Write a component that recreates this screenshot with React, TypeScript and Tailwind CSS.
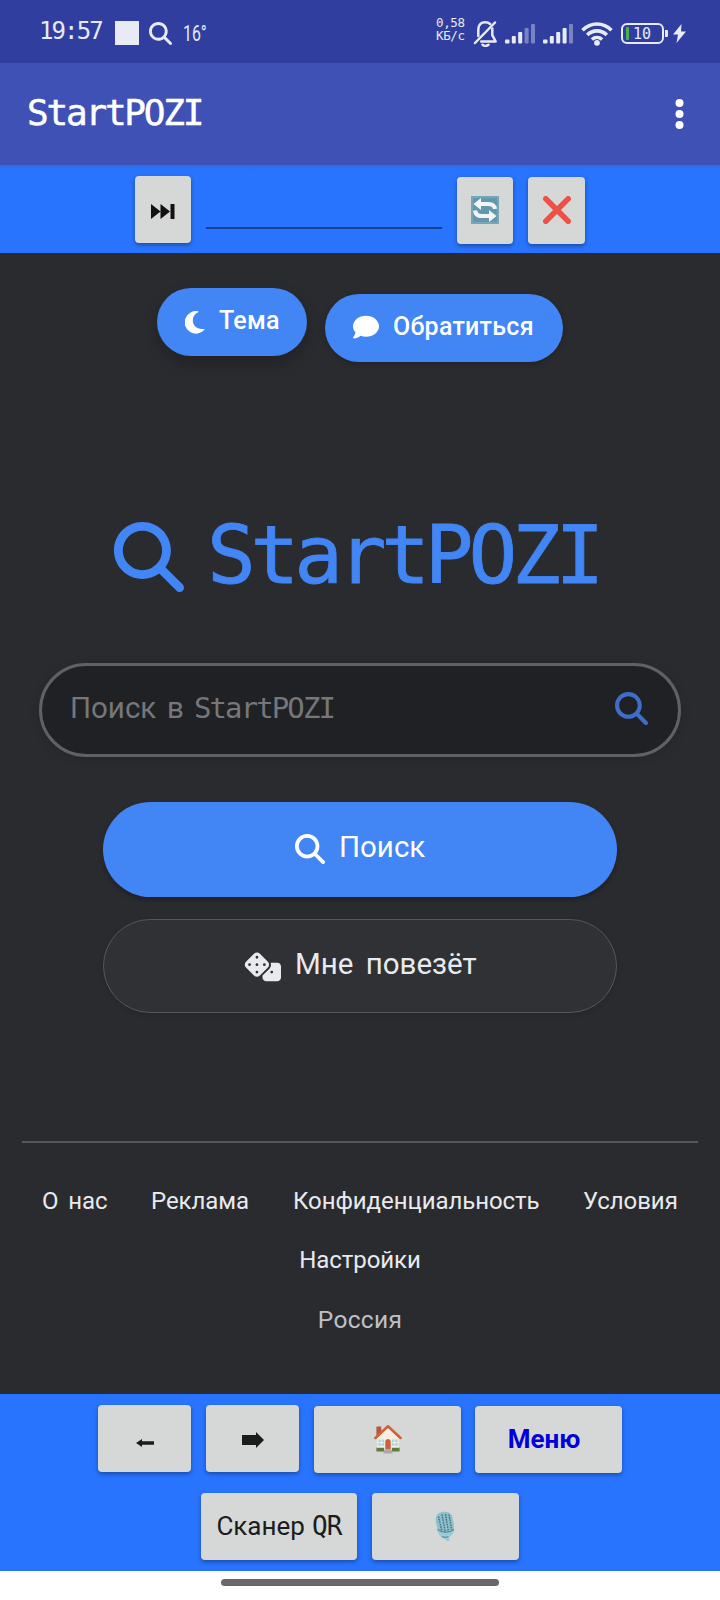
import type { ReactNode } from "react";
import { FaComment, FaDice, FaMagnifyingGlass } from "react-icons/fa6";

const mono = "font-['DejaVu_Sans_Mono',monospace]";

function Signal({ x, bars }: { x: string; bars: number }) {
  return (
    <svg className={`h-[20px] w-[31px] shrink-0 ${x}`} viewBox="0 0 31 20" fill="#e8eaf6">
      <rect x="0" y="15.5" width="4.5" height="4" rx="1" />
      <rect x="6.8" y="12" width="4" height="7.5" rx="1" />
      <rect x="13.2" y="8" width="4" height="11.5" rx="1" />
      <rect x="19.6" y="4" width="4" height="15.5" rx="1" opacity={bars > 3 ? 1 : 0.4} />
      <rect x="26" y="0" width="4" height="19.5" rx="1" opacity="0.4" />
    </svg>
  );
}

function StatusBar() {
  return (
    <header className="flex h-[63px] items-start bg-[#303f9f] text-[#e8eaf6]">
      <span className={`mt-[15px] ml-[39px] w-[76px] text-[24px] leading-[32px] tracking-[-1.9px] ${mono}`}>19:57</span>
      <span className="mt-[21px] h-[24px] w-[24px] bg-[#e8eaf6]" />
      <FaMagnifyingGlass className="mt-[22px] ml-[10px] size-[23px]" />
      <span className="mt-[21px] ml-[11px] flex w-[24px] font-['Roboto',sans-serif] text-[22px] leading-[26px]">
        <span className="origin-left scale-x-[0.72]">16°</span>
      </span>
      <div className={`mt-[16px] ml-[229px] flex w-[36px] flex-col text-[12.5px] leading-[13px] tracking-[-0.4px] whitespace-nowrap ${mono}`}>
        <span>0,58</span>
        <span>КБ/с</span>
      </div>
      <svg className="mt-[20px] ml-[1px] h-[27px] w-[25px] shrink-0" viewBox="0 0 25 27" fill="none" stroke="#e8eaf6" strokeWidth="2.5" strokeLinecap="round" strokeLinejoin="round">
        <path d="M5.3 16V9.8C5.3 4.6 8 2.3 12.2 2.3c2 0 3.6.5 4.9 1.7M19.3 8.5v6.7l3.4 6.3H8.2" />
        <path d="M2 23 22 2.5" />
        <path d="M9.5 24.8c1.8 1.3 4.3 1.3 6 0" />
      </svg>
      <Signal x="mt-[24px] ml-[7px]" bars={3} />
      <Signal x="mt-[24px] ml-[7px]" bars={4} />
      <svg className="mt-[22px] ml-[7px] h-[24px] w-[32px] shrink-0" viewBox="0 0 32 24" fill="none" stroke="#e8eaf6" strokeWidth="3.6">
        <path d="M1.5 8.2c8.300-8.200 20.700-8.200 29 0" />
        <path d="M6.2 13c5.600-5.500 14-5.500 19.600 0" />
        <path d="M10.900 17.500c3-2.700 7.200-2.700 10.200 0" />
        <circle cx="16" cy="20.800" r="2.900" fill="#e8eaf6" stroke="none" />
      </svg>
      <span className={`mt-[23px] ml-[8px] flex h-[21px] w-[43px] shrink-0 items-center rounded-[6px] border-2 border-[#e8eaf6] text-[15px] ${mono}`}>
        <span className="ml-[3px] h-[13px] w-[3px] shrink-0 rounded-[1px] bg-[#4caf50]" />
        <span className="ml-[4px] leading-[16px]">10</span>
      </span>
      <span className="mt-[30px] ml-[1px] h-[7px] w-[3px] shrink-0 rounded-r-[1px] bg-[#e8eaf6]" />
      <svg className="mt-[24px] ml-[5px] h-[19px] w-[13px] shrink-0" viewBox="0 0 13 19" fill="#e8eaf6">
        <path d="M8.500 0 0 10.500h5L3.500 19 13 7.500H8z" />
      </svg>
    </header>
  );
}

function Key({ size, children }: { size: string; children: ReactNode }) {
  return (
    <button className={`flex h-[67px] shrink-0 items-center justify-center rounded-[4px] bg-[#d6d8d7] text-[#1b1c1c] shadow-[0_2px_4px_rgba(0,0,0,0.35)] ${size}`}>
      {children}
    </button>
  );
}

function Toolbar() {
  return (
    <div className="flex h-[88px] bg-[#2874ff] bg-linear-to-b from-[#2e6ae8] to-[#2874ff] to-[5px] pt-[11px] pl-[135px]">
      <Key size="w-[56px]">
        <svg className="mt-[3px] h-[15px] w-[24px]" viewBox="0 0 24 15" fill="#111">
          <path d="M0 0 9.500 7.500 0 15zM9.500 0 19 7.500 9.500 15zM19.500 0H23.500V15H19.500z" />
        </svg>
      </Key>
      <input aria-label="URL" className="mt-[7px] ml-[15px] h-[46px] w-[236px] border-b-2 border-[#173f91] bg-transparent outline-none" />
      <div className="ml-[15px] flex gap-[15px] pt-px">
        <Key size="w-[56px]">
          <svg className="mt-[-1px] size-[28px]" viewBox="0 0 28 28">
            <rect width="28" height="28" rx="1" fill="#6497ad" />
            <path d="M1 1h26v26H1z" fill="none" stroke="#88b5c8" strokeWidth="1" />
            <path d="M9 8h8.500c4 0 6 1.500 6.500 5M19 20h-8.500c-4 0-6-1.500-6.500-5.500" fill="none" stroke="#f1f5f6" strokeWidth="4.200" />
            <path d="M2.500 8 10 2v12zM25.500 20 18 14v12z" fill="#f1f5f6" />
          </svg>
        </Key>
        <Key size="w-[57px]">
          <svg className="mt-[-1px] size-[28px]" viewBox="0 0 28 28" stroke="#ec5148" strokeWidth="5.500" strokeLinecap="round">
            <path d="M2.800 2.800 25.200 25.200M25.200 2.800 2.800 25.200" />
          </svg>
        </Key>
      </div>
    </div>
  );
}

function Content() {
  const pill = "flex h-[68px] items-center rounded-full bg-[#4285f4] text-[25px] font-medium tracking-[0.25px] text-white";
  return (
    <main className="flex h-[1141px] flex-col bg-[#2a2b2f]">
      <div className="mt-[35px] ml-[157px] flex">
        <button className={`${pill} w-[150px] pl-[28px] shadow-[0_7px_15px_rgba(0,0,0,0.22)]`}>
          <svg className="h-[23px] w-[20px]" viewBox="0 0 20 23" fill="white">
            <path d="M13.300.3A11.300 11.300 0 1 0 19.500 18.800c.4-.4 0-1-.7-.9C12.500 19 7.800 15 7.800 9.300c0-3.400 1.900-6.300 5.300-8C13.700 1 13.800.4 13.300.3z" />
          </svg>
          <span className="mt-[-2px] ml-[14px]">Тема</span>
        </button>
        <button className={`${pill} mt-[6px] ml-[18px] w-[238px] pl-[28px] shadow-[0_2px_6px_rgba(0,0,0,0.2)]`}>
          <FaComment className="mt-[-2px] size-[26px]" />
          <span className="mt-[-3px] ml-[14px]">Обратиться</span>
        </button>
      </div>
      <h1 className="mt-[147px] ml-[114px] flex h-[95px] items-center text-[#4285f4]">
        <FaMagnifyingGlass className="mt-px size-[70px]" />
        <span className={`mt-[-3px] ml-[23px] text-[81px] leading-[95px] font-normal tracking-[-5.200px] [-webkit-text-stroke:0.800px_#4285f4] ${mono}`}>StartPOZI</span>
      </h1>
      <div className="mt-[59px] ml-[39px] flex h-[94px] w-[642px] items-center rounded-full border-[3px] border-[#5f6165] bg-[#202124] pl-[28px] text-[29.500px] text-[#75777a] shadow-[0_2px_12px_rgba(0,0,0,0.12)]">
        <span className="mt-[-3px] w-[97px]">Поиск</span>
        <span className="mt-[-3px] w-[27px]">в</span>
        <span className={`mt-[-3px] w-[145px] text-[29px] tracking-[-1.900px] ${mono}`}>StartPOZI</span>
        <FaMagnifyingGlass className="mt-[-3px] ml-[276px] size-[33px] text-[#3d6ec9]" />
      </div>
      <div className="mt-[45px] ml-[103px] flex w-[514px] flex-col gap-[22px] text-[29.500px]">
        <button className="flex h-[95px] items-center rounded-full bg-[#4285f4] pl-[192px] text-white shadow-[0_3px_5px_rgba(0,0,0,0.25)]">
          <FaMagnifyingGlass className="mt-[-1px] size-[30px]" />
          <span className="mt-[-4px] ml-[14px]">Поиск</span>
        </button>
        <button className="flex h-[94px] items-center rounded-full border border-[#55575b] bg-[#303134] pl-[140px] text-[#e8eaed] shadow-[0_2px_5px_rgba(0,0,0,0.12)]">
          <FaDice className="h-[37px] w-[37px]" />
          <span className="mt-[-4px] ml-[14px] [word-spacing:5px]">Мне повезёт</span>
        </button>
      </div>
      <footer className="mt-[128px] ml-[22px] flex w-[676px] flex-col border-t-2 border-[#55565a] text-[24px] leading-[30px] tracking-[-0.060px] text-[#e8eaed]">
        <nav className="mt-[43px] flex flex-wrap">
          <span className="ml-[20px] w-[109px] [word-spacing:4px]">О нас</span>
          <span className="w-[142px]">Реклама</span>
          <span className="w-[290px]">Конфиденциальность</span>
          <span>Условия</span>
        </nav>
        <span className="mt-[29px] text-center">Настройки</span>
        <span className="mt-[30px] text-center text-[24.500px] tracking-[0.300px] text-[#bdc1c6]">Россия</span>
      </footer>
    </main>
  );
}

function House() {
  return (
    <svg className="mt-[-1px] h-[30px] w-[28px]" viewBox="0 0 29 30">
      <path d="M2.500 2h5V9l-5 5z" fill="#b9553a" />
      <path d="M3.500 14 14.500 3.500 25.500 14v13h-22z" fill="#f5efe2" />
      <path d="M1.500 14 14.500 1.800 27.500 14" fill="none" stroke="#cf6238" strokeWidth="2.600" strokeLinecap="round" strokeLinejoin="round" />
      <path d="M4.500 15.500h6v6.500h-6zM18.500 15.500h6v6.500h-6z" fill="#b4d0da" />
      <path d="M7.500 15.500v6.500M4.500 18.700h6M21.500 15.500v6.500M18.500 18.700h6" stroke="#f7fafa" strokeWidth="0.800" />
      <path d="M11.700 26v-8.500c0-3.500 5.600-3.500 5.600 0V26z" fill="#c9633c" />
      <path d="M2.500 24h8v4h-8zM18.500 24h8v4h-8z" fill="#5f7d3c" />
      <path d="M11 26h7l1.500 4h-10z" fill="#aaa9ad" />
    </svg>
  );
}

function Microphone() {
  return (
    <svg className="mr-[2px] h-[31px] w-[22px]" viewBox="0 0 22 31">
      <path d="M3 17 20 18.500c0 4-2.500 6.500-5 7.500l.7 3.500-2.200 1L10 27.500C6 26.500 3.500 22 3 17z" fill="#9ccbd6" />
      <path d="M2 6C3.500 0 14.500-1 17.500 4c1.500 4 2.500 9 2.500 14-2 4.500-12 5-15.500 1C2.500 15.500 1 10 2 6z" fill="#8dc0cc" />
      <path d="M4.500 5.500 8 21M8 3.500 11.300 21.500M11.500 3 14.500 21M15 3.500 17.800 19.500" stroke="#46707f" strokeWidth="1.400" strokeDasharray="1.600 0.900" />
      <path d="M3.500 18.500c4.500 3.500 11.500 3.500 16.500 0" fill="none" stroke="#5a8f9d" strokeWidth="1.300" />
      <path d="M8 25.500c2 1 4.500 1 6.500 0" fill="none" stroke="#5795a5" strokeWidth="1.200" />
    </svg>
  );
}

function BottomBar() {
  return (
    <div className="flex h-[177px] flex-col bg-[#2874ff]">
      <div className="mt-[11px] ml-[98px] flex h-[88px] gap-[15px]">
        <Key size="w-[93px]">
          <svg className="mt-[8px] h-[8px] w-[18px]" viewBox="0 0 18 8" fill="#1b1c1c">
            <path d="M0 4 6 0v2.200h12v3.600H6V8z" />
          </svg>
        </Key>
        <Key size="w-[93px]">
          <svg className="mt-[2px] h-[16px] w-[22px]" viewBox="0 0 22 16" fill="#1b1c1c">
            <path d="M0 3h14V0l8 8-8 8v-3H0z" />
          </svg>
        </Key>
        <div className="flex gap-[14px] pt-px">
          <Key size="w-[147px]"><House /></Key>
          <Key size="w-[147px]">
            <span className="mr-[9px] text-[26px] font-bold text-[#0000dc]">Меню</span>
          </Key>
        </div>
      </div>
      <div className="ml-[201px] flex gap-[15px]">
        <Key size="w-[156px]">
          <span className="text-[26px]">Сканер</span>
          <span className={`ml-[7px] text-[26px] tracking-[-0.800px] ${mono}`}>QR</span>
        </Key>
        <Key size="w-[147px]"><Microphone /></Key>
      </div>
    </div>
  );
}

export default function App() {
  return (
    <div className="flex h-[1600px] w-[720px] flex-col overflow-hidden bg-white font-['Roboto',sans-serif]">
      <StatusBar />
      <div className="flex h-[102px] items-center bg-[#3f51b5] text-white">
        <span className={`mt-[-3px] ml-[27px] w-[640px] text-[36px] leading-[48px] tracking-[-2.200px] [-webkit-text-stroke:0.500px_white] ${mono}`}>StartPOZI</span>
        <svg className="mt-[-1px] ml-[8px] h-[32px] w-[9px]" viewBox="0 0 9 32" fill="white">
          <circle cx="4.500" cy="5" r="4" />
          <circle cx="4.500" cy="16" r="4" />
          <circle cx="4.500" cy="27" r="4" />
        </svg>
      </div>
      <Toolbar />
      <Content />
      <BottomBar />
      <div className="mx-auto mt-[8px] h-[7px] w-[278px] rounded-full bg-[#686868]" />
    </div>
  );
}
